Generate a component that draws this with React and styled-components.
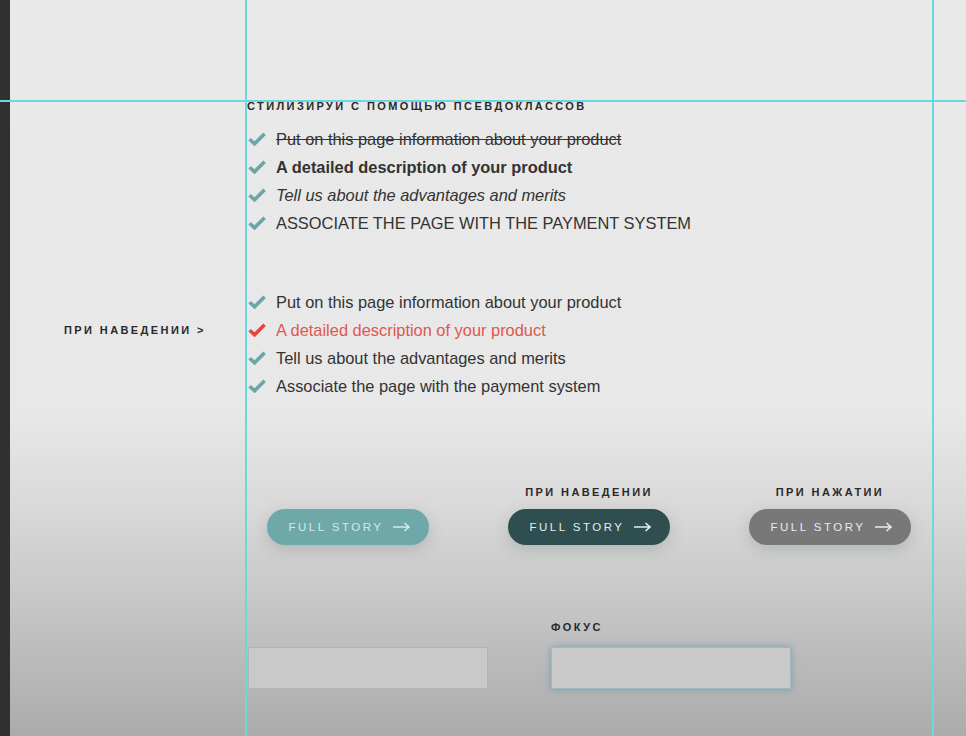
import React from "react";
import styled, { createGlobalStyle } from "styled-components";

const GlobalStyle = createGlobalStyle`
    html, body {
        margin: 0;
        padding: 0;
    }
    body {
        font-family: "Liberation Sans", Arial, sans-serif;
        color: #333;
    }
`;

const firstList = [
    { text: "Put on this page information about your product", variant: "strike" },
    { text: "A detailed description of your product", variant: "bold" },
    { text: "Tell us about the advantages and merits", variant: "italic" },
    { text: "Associate the page with the payment system", variant: "upper" },
];

const secondList = [
    { text: "Put on this page information about your product" },
    { text: "A detailed description of your product", hover: true },
    { text: "Tell us about the advantages and merits" },
    { text: "Associate the page with the payment system" },
];

const buttons = [
    { label: "", state: "normal" },
    { label: "при наведении", state: "hover" },
    { label: "при нажатии", state: "active" },
];

const Check = ({ color }) => (
    <CheckIcon viewBox="0 0 18 14" aria-hidden="true">
        <path
            d="M1.6 7.2 L6.6 11.8 L16.6 1.8"
            fill="none"
            stroke={color}
            strokeWidth="3.6"
            strokeLinejoin="miter"
        />
    </CheckIcon>
);

const Arrow = () => (
    <ArrowIcon viewBox="0 0 18 10" aria-hidden="true">
        <path d="M0 5 H16 M11.5 1 L16 5 L11.5 9" fill="none" stroke="currentColor" strokeWidth="1.6" />
    </ArrowIcon>
);

const App = () => {
    return (
        <>
            <GlobalStyle />
            <Page>
                <DarkStrip />
                <Grid>
                    <Cell />
                    <Section>
                        <Caption>Стилизируй с помощью псевдоклассов</Caption>
                        <List>
                            {firstList.map((item) => (
                                <Item key={item.text}>
                                    <Check color="#69a6a7" />
                                    <ItemText variant={item.variant}>{item.text}</ItemText>
                                </Item>
                            ))}
                        </List>
                    </Section>

                    <SideLabel>При наведении &gt;</SideLabel>
                    <List second>
                        {secondList.map((item) => (
                            <Item key={item.text}>
                                <Check color={item.hover ? "#e0473d" : "#69a6a7"} />
                                <ItemText hover={item.hover ? 1 : 0}>{item.text}</ItemText>
                            </Item>
                        ))}
                    </List>

                    <Cell />
                    <ButtonRow>
                        {buttons.map((b) => (
                            <ButtonCell key={b.state}>
                                <Caption center>{b.label || "\u00a0"}</Caption>
                                <StoryButton state={b.state}>
                                    Full story <Arrow />
                                </StoryButton>
                            </ButtonCell>
                        ))}
                    </ButtonRow>

                    <Cell />
                    <InputRow>
                        <InputCell>
                            <Caption>&nbsp;</Caption>
                            <Field />
                        </InputCell>
                        <InputCell>
                            <Caption>Фокус</Caption>
                            <Field focused />
                        </InputCell>
                    </InputRow>
                </Grid>

                <GuideV style={{ left: 245 }} />
                <GuideV style={{ left: 932 }} />
                <GuideH style={{ top: 100 }} />
            </Page>
        </>
    );
};

export default App;

const Page = styled.div`
    position: relative;
    display: flex;
    width: 966px;
    height: 736px;
    overflow: hidden;
    background: linear-gradient(
        to bottom,
        #e9e9e9 0%,
        #e8e8e8 56%,
        #dadada 68%,
        #c6c6c6 82%,
        #ababab 100%
    );
`;

const DarkStrip = styled.div`
    width: 10px;
    flex: none;
    background: #303030;
`;

const Grid = styled.div`
    display: grid;
    grid-template-columns: 237px 1fr;
    align-content: start;
    flex: 1;
    padding-top: 99px;
`;

const Cell = styled.div``;

const Section = styled.div`
    display: flex;
    flex-direction: column;
`;

const Caption = styled.div`
    font-size: 11px;
    line-height: 14px;
    font-weight: 700;
    letter-spacing: 2.4px;
    text-transform: uppercase;
    color: #2a2a2a;
    white-space: nowrap;
    text-align: ${(p) => (p.center ? "center" : "left")};
`;

const List = styled.ul`
    list-style: none;
    margin: ${(p) => (p.second ? "51px 0 0" : "12px 0 0")};
    padding: 0;
`;

const Item = styled.li`
    display: flex;
    align-items: center;
    height: 28px;
    padding-left: 1px;
`;

const CheckIcon = styled.svg`
    width: 18px;
    height: 14px;
    flex: none;
    margin-right: 10px;
`;

const ItemText = styled.span`
    font-size: 16.4px;
    color: ${(p) => (p.hover ? "#e0574e" : "#333")};
    font-weight: ${(p) => (p.variant === "bold" ? 700 : 400)};
    font-style: ${(p) => (p.variant === "italic" ? "italic" : "normal")};
    text-decoration: ${(p) => (p.variant === "strike" ? "line-through" : "none")};
    text-transform: ${(p) => (p.variant === "upper" ? "uppercase" : "none")};
`;

const SideLabel = styled.div`
    margin-top: 51px;
    padding: 35px 0 0 54px;
    font-size: 11px;
    line-height: 14px;
    font-weight: 700;
    letter-spacing: 2.4px;
    text-transform: uppercase;
    color: #2a2a2a;
`;

const ButtonRow = styled.div`
    display: flex;
    gap: 79px;
    margin-top: 85px;
    padding-left: 20px;
`;

const ButtonCell = styled.div`
    display: flex;
    flex-direction: column;
    align-items: center;
    gap: 10px;
    width: 162px;
`;

const buttonColors = {
    normal: "#6ea8a9",
    hover: "#2f4e4f",
    active: "#787878",
};

const StoryButton = styled.button`
    display: flex;
    align-items: center;
    justify-content: center;
    gap: 9px;
    width: 162px;
    height: 36px;
    padding: 0 0 0 3px;
    border: none;
    border-radius: 18px;
    background: ${(p) => buttonColors[p.state]};
    color: ${(p) => (p.state === "normal" ? "#d6e8e8" : "#e6eded")};
    font-family: "Liberation Sans", Arial, sans-serif;
    font-size: 11.5px;
    letter-spacing: 2.5px;
    text-transform: uppercase;
    box-shadow: 0 5px 16px rgba(60, 80, 80, 0.2);
    cursor: pointer;
`;

const ArrowIcon = styled.svg`
    width: 18px;
    height: 10px;
`;

const InputRow = styled.div`
    display: flex;
    gap: 63px;
    margin-top: 75px;
    padding-left: 1px;
`;

const InputCell = styled.div`
    display: flex;
    flex-direction: column;
    gap: 13px;
`;

const Field = styled.div`
    width: 238px;
    height: 40px;
    background: #c9c9c9;
    border: 1px solid ${(p) => (p.focused ? "#9fb8c4" : "#b3b3b3")};
    box-shadow: ${(p) => (p.focused ? "0 0 7px rgba(70, 130, 160, 0.55)" : "none")};
`;

const GuideV = styled.div`
    position: absolute;
    top: 0;
    bottom: 0;
    width: 2px;
    background: #6bd8e0;
`;

const GuideH = styled.div`
    position: absolute;
    left: 0;
    right: 0;
    height: 2px;
    background: #6bd8e0;
`;
